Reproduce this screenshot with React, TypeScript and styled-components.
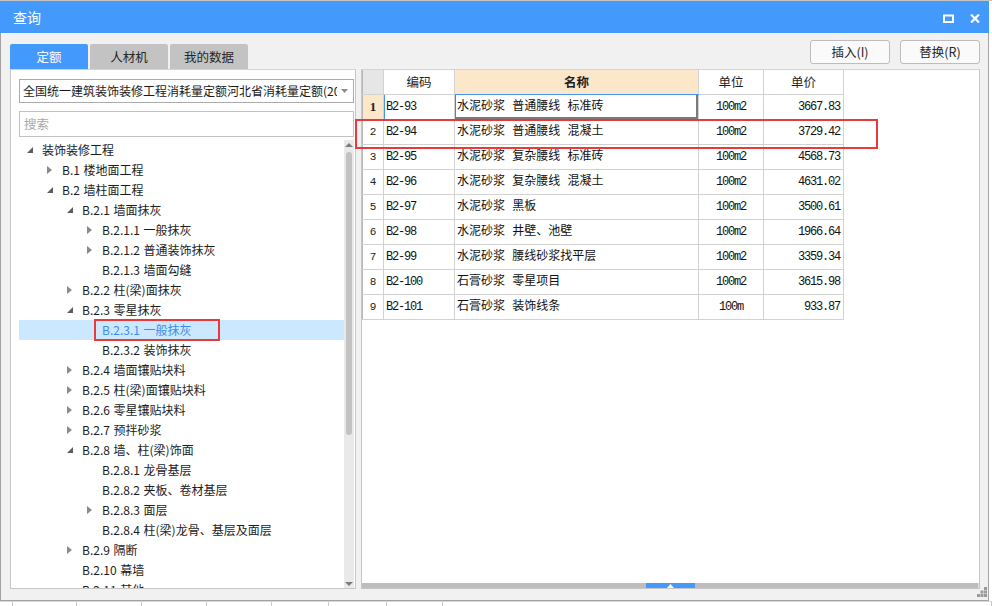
import React from 'react'
import styled, { createGlobalStyle } from 'styled-components'

const GlobalStyle = createGlobalStyle`
  html, body {
    margin: 0;
    padding: 0;
    background: #ffffff;
  }
  body {
    width: 992px;
    height: 606px;
    overflow: hidden;
    font-family: "Noto Sans CJK SC", "Liberation Sans", sans-serif;
  }
`

type TreeNode = {
  label: string
  level: number
  state: 'open' | 'closed' | 'leaf'
  selected?: boolean
}

const treeData: TreeNode[] = [
  { label: '装饰装修工程', level: 0, state: 'open' },
  { label: 'B.1 楼地面工程', level: 1, state: 'closed' },
  { label: 'B.2 墙柱面工程', level: 1, state: 'open' },
  { label: 'B.2.1 墙面抹灰', level: 2, state: 'open' },
  { label: 'B.2.1.1 一般抹灰', level: 3, state: 'closed' },
  { label: 'B.2.1.2 普通装饰抹灰', level: 3, state: 'closed' },
  { label: 'B.2.1.3 墙面勾缝', level: 3, state: 'leaf' },
  { label: 'B.2.2 柱(梁)面抹灰', level: 2, state: 'closed' },
  { label: 'B.2.3 零星抹灰', level: 2, state: 'open' },
  { label: 'B.2.3.1 一般抹灰', level: 3, state: 'leaf', selected: true },
  { label: 'B.2.3.2 装饰抹灰', level: 3, state: 'leaf' },
  { label: 'B.2.4 墙面镶贴块料', level: 2, state: 'closed' },
  { label: 'B.2.5 柱(梁)面镶贴块料', level: 2, state: 'closed' },
  { label: 'B.2.6 零星镶贴块料', level: 2, state: 'closed' },
  { label: 'B.2.7 预拌砂浆', level: 2, state: 'closed' },
  { label: 'B.2.8 墙、柱(梁)饰面', level: 2, state: 'open' },
  { label: 'B.2.8.1 龙骨基层', level: 3, state: 'leaf' },
  { label: 'B.2.8.2 夹板、卷材基层', level: 3, state: 'leaf' },
  { label: 'B.2.8.3 面层', level: 3, state: 'closed' },
  { label: 'B.2.8.4 柱(梁)龙骨、基层及面层', level: 3, state: 'leaf' },
  { label: 'B.2.9 隔断', level: 2, state: 'closed' },
  { label: 'B.2.10 幕墙', level: 2, state: 'leaf' },
  { label: 'B.2.11 其他', level: 2, state: 'leaf' },
]

const rows = [
  { code: 'B2-93', name: '水泥砂浆 普通腰线 标准砖', unit: '100m2', price: '3667.83' },
  { code: 'B2-94', name: '水泥砂浆 普通腰线 混凝土', unit: '100m2', price: '3729.42' },
  { code: 'B2-95', name: '水泥砂浆 复杂腰线 标准砖', unit: '100m2', price: '4568.73' },
  { code: 'B2-96', name: '水泥砂浆 复杂腰线 混凝土', unit: '100m2', price: '4631.02' },
  { code: 'B2-97', name: '水泥砂浆 黑板', unit: '100m2', price: '3500.61' },
  { code: 'B2-98', name: '水泥砂浆 井壁、池壁', unit: '100m2', price: '1966.64' },
  { code: 'B2-99', name: '水泥砂浆 腰线砂浆找平层', unit: '100m2', price: '3359.34' },
  { code: 'B2-100', name: '石膏砂浆 零星项目', unit: '100m2', price: '3615.98' },
  { code: 'B2-101', name: '石膏砂浆 装饰线条', unit: '100m', price: '933.87' },
]

const backdropCells = [
  { w: 13, t: '1' },
  { w: 64, t: '0' },
  { w: 65, t: '0.5' },
  { w: 65, t: '0.5' },
  { w: 65, t: '0' },
  { w: 57, t: '' },
  { w: 58, t: '' },
  { w: 56, t: '1' },
  { w: 549, t: '' },
]

function ExpandIcon({ state }: { state: TreeNode['state'] }) {
  if (state === 'leaf') return null
  if (state === 'open') {
    return (
      <svg width="6" height="6" viewBox="0 0 6 6">
        <polygon points="6,0 6,6 0,6" fill="#5c5c5c" />
      </svg>
    )
  }
  return (
    <svg width="5" height="8" viewBox="0 0 5 8">
      <polygon points="0,0 5,4 0,8" fill="#8a8a8a" />
    </svg>
  )
}

export default function App() {
  return (
    <Page>
      <GlobalStyle />
      <TopBackdrop />
      <Dialog>
        <TitleBar>
          <Title>查询</Title>
          <WindowButtons>
            <svg width="11" height="9" viewBox="0 0 11 9">
              <rect x="1" y="1.5" width="9" height="6.5" fill="none" stroke="#fff" strokeWidth="2" />
            </svg>
            <svg width="10" height="9" viewBox="0 0 10 9">
              <path d="M1 0.5 L9 8.5 M9 0.5 L1 8.5" stroke="#fff" strokeWidth="2.2" />
            </svg>
          </WindowButtons>
        </TitleBar>

        <Body>
          <Toolbar>
            <Tabs>
              <Tab active>定额</Tab>
              <Tab>人材机</Tab>
              <Tab>我的数据</Tab>
            </Tabs>
            <Actions>
              <ActionButton>插入(I)</ActionButton>
              <ActionButton>替换(R)</ActionButton>
            </Actions>
          </Toolbar>

          <Panels>
            <LeftPanel>
              <SelectBox>
                <SelectText>全国统一建筑装饰装修工程消耗量定额河北省消耗量定额(2012)</SelectText>
                <svg width="7" height="4" viewBox="0 0 7 4">
                  <polygon points="0,0 7,0 3.5,4" fill="#8c8c8c" />
                </svg>
              </SelectBox>
              <SearchBox>搜索</SearchBox>
              <TreeArea>
                <TreeList>
                  {treeData.map((n, i) => (
                    <TreeRow key={i} selected={n.selected}>
                      <Indent style={{ width: n.level * 20 }} />
                      <Toggle>
                        <ExpandIcon state={n.state} />
                      </Toggle>
                      <TreeLabel selected={n.selected}>{n.label}</TreeLabel>
                    </TreeRow>
                  ))}
                </TreeList>
                <VScroll>
                  <ScrollArrow>
                    <svg width="8" height="4" viewBox="0 0 8 4">
                      <polygon points="0,4 8,4 4,0" fill="#7c7c7c" />
                    </svg>
                  </ScrollArrow>
                  <VThumb />
                  <ScrollArrow>
                    <svg width="8" height="4" viewBox="0 0 8 4">
                      <polygon points="0,0 8,0 4,4" fill="#7c7c7c" />
                    </svg>
                  </ScrollArrow>
                </VScroll>
              </TreeArea>
            </LeftPanel>

            <RightPanel>
              <Grid>
                <colgroup>
                  <col style={{ width: 21 }} />
                  <col style={{ width: 71 }} />
                  <col style={{ width: 244 }} />
                  <col style={{ width: 65 }} />
                  <col style={{ width: 80 }} />
                </colgroup>
                <thead>
                  <tr>
                    <HeadCell kind="corner" />
                    <HeadCell>编码</HeadCell>
                    <HeadCell kind="current">名称</HeadCell>
                    <HeadCell>单位</HeadCell>
                    <HeadCell>单价</HeadCell>
                  </tr>
                </thead>
                <tbody>
                  {rows.map((r, i) => (
                    <tr key={r.code}>
                      <NumCell current={i === 0}>{i + 1}</NumCell>
                      <CodeCell current={i === 0}>{r.code}</CodeCell>
                      <NameCell focused={i === 0}>{r.name}</NameCell>
                      <MonoCell align="center">{r.unit}</MonoCell>
                      <MonoCell align="right">{r.price}</MonoCell>
                    </tr>
                  ))}
                </tbody>
              </Grid>
              <Spacer />
              <HScroll>
                <HThumb>
                  <svg width="7" height="4" viewBox="0 0 7 4">
                    <polygon points="0,4 7,4 3.5,0" fill="#fff" />
                  </svg>
                </HThumb>
              </HScroll>
            </RightPanel>
          </Panels>
        </Body>

        <Grip>
          <svg width="10" height="10" viewBox="0 0 10 10" fill="#9a9a9a">
            <rect x="7" y="0" width="3" height="3" />
            <rect x="3.5" y="3.5" width="3" height="3" />
            <rect x="7" y="3.5" width="3" height="3" />
            <rect x="0" y="7" width="3" height="3" />
            <rect x="3.5" y="7" width="3" height="3" />
            <rect x="7" y="7" width="3" height="3" />
          </svg>
        </Grip>

        <Highlight style={{ left: 354, top: 118, width: 523, height: 30 }} />
        <Highlight style={{ left: 93, top: 318, width: 126, height: 22 }} />
      </Dialog>
      <BottomBackdrop>
        {backdropCells.map((c, i) => (
          <BackdropCell key={i} style={{ width: c.w }}>
            {c.t}
          </BackdropCell>
        ))}
      </BottomBackdrop>
    </Page>
  )
}

const Page = styled.div`
  width: 992px;
  height: 606px;
  display: flex;
  flex-direction: column;
  overflow: hidden;
`

const TopBackdrop = styled.div`
  height: 1px;
  background: #c4c4c4;
  flex-shrink: 0;
`

const Dialog = styled.div`
  position: relative;
  width: 989px;
  height: 600px;
  flex-shrink: 0;
  box-sizing: border-box;
  border: 1px solid #a2a2a2;
  border-top: none;
  background: #f1f1f1;
  display: flex;
  flex-direction: column;
`

const TitleBar = styled.div`
  height: 32px;
  margin: 0 -1px;
  background: #4499fc;
  display: flex;
  align-items: center;
  justify-content: space-between;
  padding: 0 9px 0 13px;
`

const Title = styled.span`
  color: #ffffff;
  font-size: 14px;
  line-height: 32px;
`

const WindowButtons = styled.div`
  display: flex;
  align-items: center;
  gap: 16px;
  margin-top: 2px;
`

const Body = styled.div`
  flex: 1;
  display: flex;
  flex-direction: column;
  padding: 0 8px 11px 9px;
`

const Toolbar = styled.div`
  height: 36px;
  display: flex;
  justify-content: space-between;
`

const Tabs = styled.div`
  display: flex;
  align-items: flex-end;
  gap: 2px;
`

const Tab = styled.div<{ active?: boolean }>`
  width: 78px;
  height: 25px;
  box-sizing: border-box;
  border-radius: 2px 2px 0 0;
  background: ${p => (p.active ? '#4499fc' : '#c3c3c3')};
  color: ${p => (p.active ? '#ffffff' : '#262626')};
  font-size: 12.5px;
  line-height: 25px;
  text-align: center;
`

const Actions = styled.div`
  display: flex;
  gap: 10px;
  padding-top: 7px;
`

const ActionButton = styled.div`
  width: 80px;
  height: 24px;
  box-sizing: border-box;
  border: 1px solid #bcbcbc;
  border-radius: 3px;
  background: #fafafa;
  color: #262626;
  font-size: 12.5px;
  line-height: 22px;
  text-align: center;
`

const Panels = styled.div`
  height: 520px;
  display: flex;
  gap: 5px;
`

const LeftPanel = styled.div`
  width: 346px;
  box-sizing: border-box;
  border: 1px solid #c6c6c6;
  border-top-color: #d4d4d4;
  background: #ffffff;
  display: flex;
  flex-direction: column;
  padding: 9px 1px 0 8px;
`

const SelectBox = styled.div`
  height: 24px;
  box-sizing: border-box;
  border: 1px solid #ababab;
  display: flex;
  align-items: center;
  padding: 0 5px 0 3px;
  gap: 4px;
`

const SelectText = styled.span`
  flex: 1;
  overflow: hidden;
  white-space: nowrap;
  font-size: 12px;
  color: #1a1a1a;
  line-height: 22px;
`

const SearchBox = styled.div`
  height: 26px;
  margin-top: 8px;
  box-sizing: border-box;
  border: 1px solid #c2c2c2;
  padding-left: 4px;
  font-size: 12.5px;
  line-height: 24px;
  color: #a8a8a8;
`

const TreeArea = styled.div`
  flex: 1;
  margin-top: 3px;
  display: flex;
  overflow: hidden;
`

const TreeList = styled.div`
  flex: 1;
  overflow: hidden;
`

const TreeRow = styled.div<{ selected?: boolean }>`
  height: 20px;
  display: flex;
  align-items: center;
  background: ${p => (p.selected ? '#cce8ff' : 'transparent')};
`

const Indent = styled.span`
  flex-shrink: 0;
`

const Toggle = styled.span`
  width: 23px;
  flex-shrink: 0;
  display: flex;
  align-items: center;
  justify-content: center;
  padding-right: 2px;
  box-sizing: border-box;
`

const TreeLabel = styled.span<{ selected?: boolean }>`
  font-size: 12px;
  line-height: 20px;
  white-space: nowrap;
  word-spacing: 1px;
  color: ${p => (p.selected ? '#3a8ee8' : '#1c1c1c')};
`

const VScroll = styled.div`
  width: 10px;
  background: #e9e9e9;
  display: flex;
  flex-direction: column;
  align-items: center;
`

const ScrollArrow = styled.div`
  height: 9px;
  display: flex;
  align-items: center;
  justify-content: center;
  flex-shrink: 0;
`

const VThumb = styled.div`
  width: 6px;
  height: 283px;
  margin-top: 3px;
  margin-bottom: auto;
  border-radius: 3px;
  background: #c2c2c2;
`

const RightPanel = styled.div`
  flex: 1;
  box-sizing: border-box;
  border: 1px solid #c6c6c6;
  border-top-color: #d4d4d4;
  background: #ffffff;
  display: flex;
  flex-direction: column;
`

const Grid = styled.table`
  width: 481px;
  table-layout: fixed;
  border-collapse: collapse;

  td, th {
    border: 1px solid #d2d2d2;
    padding: 0;
    overflow: hidden;
    white-space: nowrap;
    line-height: 16px;
  }
  tbody tr {
    height: 25px;
  }
  thead tr {
    height: 24px;
  }
  tr:first-child th {
    border-top: none;
  }
  tr > *:first-child {
    border-left: 1px solid #b8b8b8;
  }
`

const HeadCell = styled.th<{ kind?: 'corner' | 'current' }>`
  font-size: 12.5px;
  color: #1e1e1e;
  font-weight: ${p => (p.kind === 'current' ? 'bold' : 'normal')};
  background: ${p =>
    p.kind === 'corner' ? '#e6e6e6' : p.kind === 'current' ? '#fde7cb' : '#ffffff'};
  text-align: center;
  ${p => (p.kind === 'current' ? 'border-bottom: 1px solid #4596f4 !important;' : '')}
`

const NumCell = styled.td<{ current?: boolean }>`
  text-align: center;
  font-family: ${p => (p.current ? '"Liberation Serif", serif' : '"Liberation Mono", monospace')};
  font-weight: ${p => (p.current ? 'bold' : 'normal')};
  font-size: ${p => (p.current ? '13px' : '11px')};
  color: #222;
  background: ${p => (p.current ? '#fde7cb' : '#ffffff')};
`

const CodeCell = styled.td<{ current?: boolean }>`
  font-family: "Liberation Mono", monospace;
  font-size: 12px;
  letter-spacing: -1.2px;
  color: #111;
  padding-left: 2px !important;
  ${p => (p.current ? 'box-shadow: inset 1px 0 0 #4596f4;' : '')}
`

const NameCell = styled.td<{ focused?: boolean }>`
  font-family: "Liberation Mono", "Noto Sans CJK SC", monospace;
  font-size: 12px;
  color: #111;
  padding-left: 2px !important;
  ${p => (p.focused ? 'box-shadow: inset -2px -2px 0 #7a7a7a, inset 1px 0 0 #7a7a7a;' : '')}
`

const MonoCell = styled.td<{ align: 'center' | 'right' }>`
  font-family: "Liberation Mono", monospace;
  font-size: 12px;
  letter-spacing: -1.2px;
  color: #111;
  text-align: ${p => p.align};
  padding-right: ${p => (p.align === 'right' ? '3px' : '0')} !important;
`

const Spacer = styled.div`
  flex: 1;
`

const HScroll = styled.div`
  height: 5px;
  background: #bdbdbd;
  display: flex;
  flex-shrink: 0;
  border-right: 1px solid #e0e0e0;
`

const HThumb = styled.div`
  width: 49px;
  margin-left: 284px;
  background: #4499fc;
  display: flex;
  align-items: center;
  justify-content: center;
`

const Grip = styled.div`
  position: absolute;
  right: 1px;
  bottom: 3px;
  line-height: 0;
`

const Highlight = styled.div`
  position: absolute;
  box-sizing: border-box;
  border: 2px solid #e8393b;
  pointer-events: none;
`

const BottomBackdrop = styled.div`
  flex: 1;
  display: flex;
  background: #ffffff;
  border-top: 1px solid #d8d8d8;
  overflow: hidden;
`

const BackdropCell = styled.div`
  flex-shrink: 0;
  box-sizing: border-box;
  border-right: 1px solid #c8c8c8;
  font-family: "Liberation Sans", sans-serif;
  font-size: 12px;
  line-height: 18px;
  text-align: right;
  padding-right: 4px;
  color: #333;
`
